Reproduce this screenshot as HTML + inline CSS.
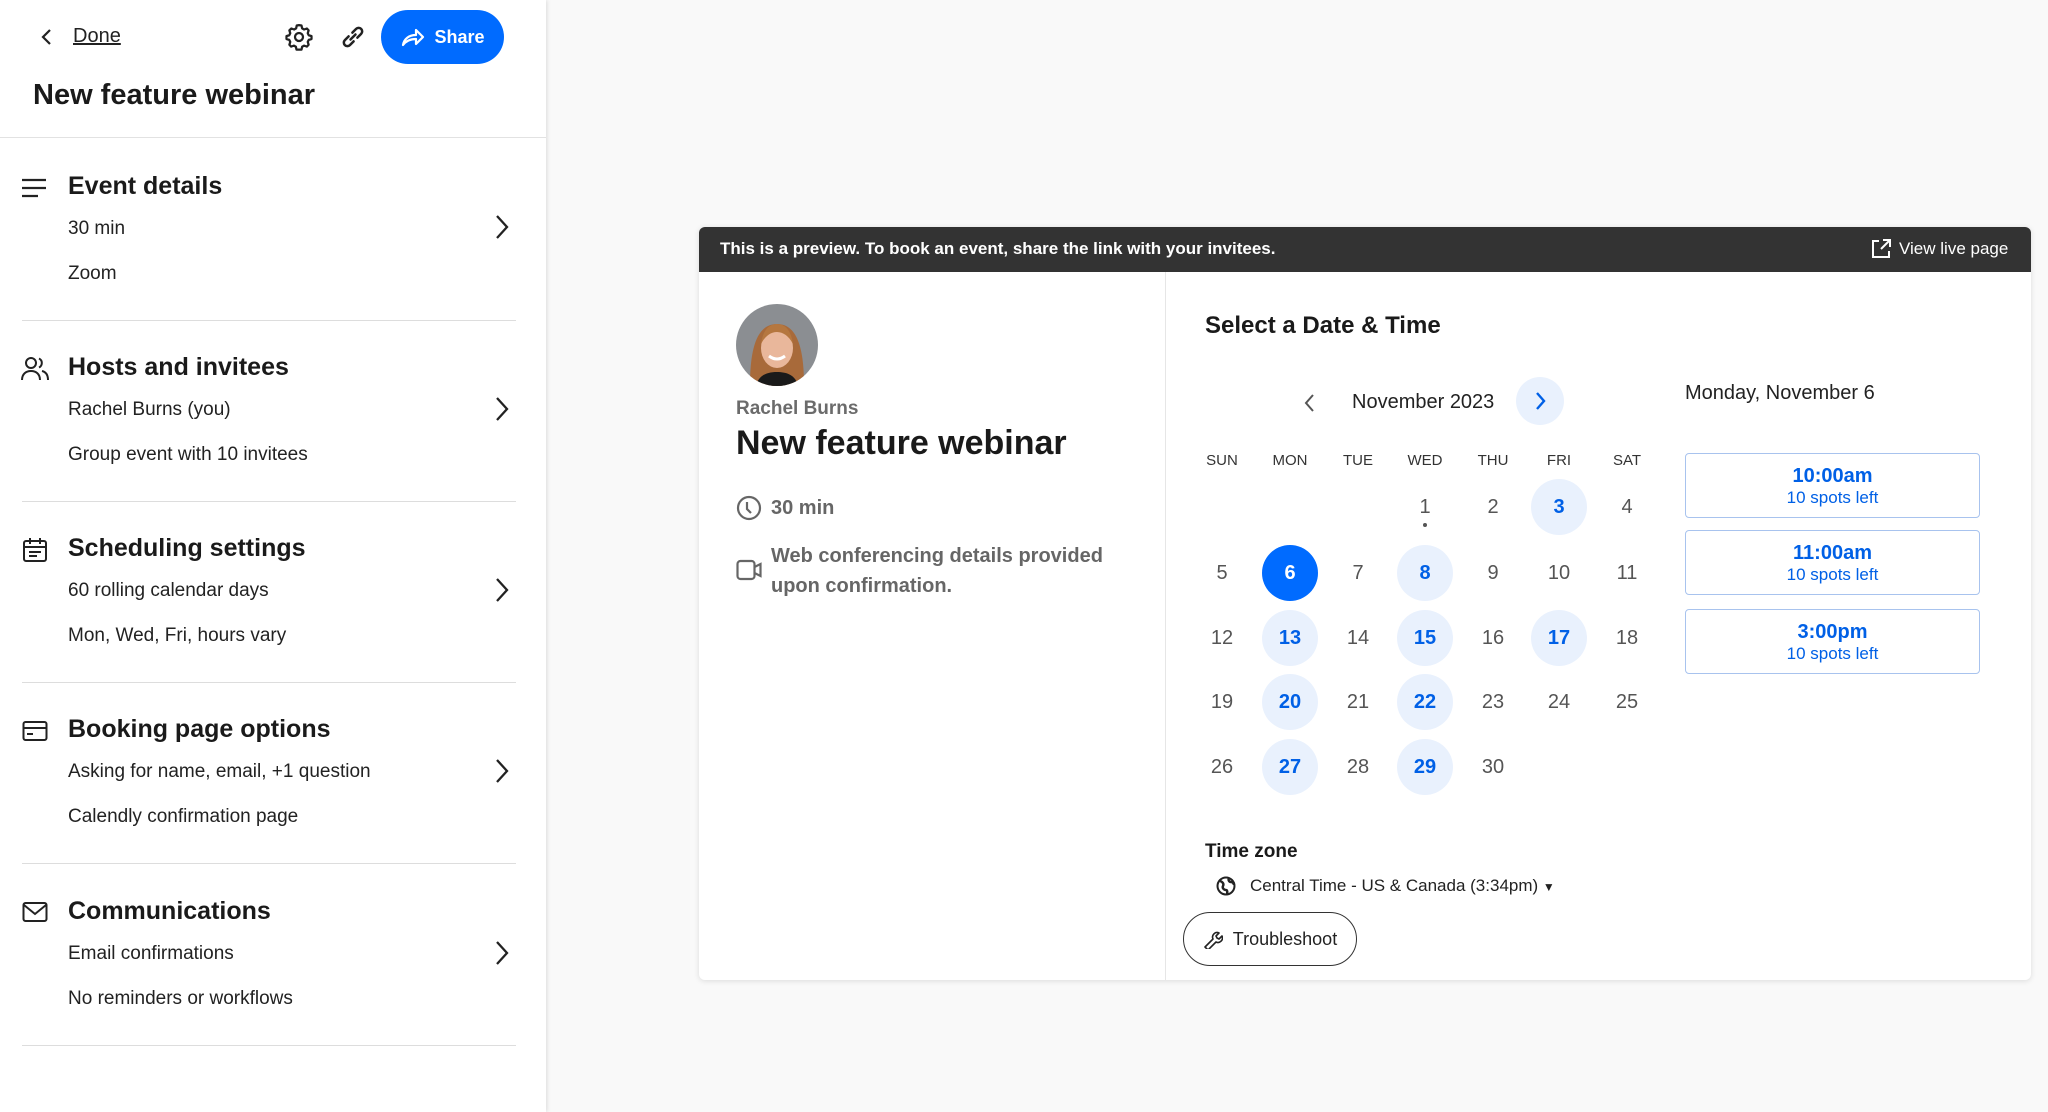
<!DOCTYPE html>
<html><head><meta charset="utf-8"><style>
*{box-sizing:border-box;margin:0;padding:0}
body{width:2048px;height:1112px;background:#f9f9f9;font-family:"Liberation Sans",sans-serif;color:#1a1a1a;position:relative;overflow:hidden}
.abs{position:absolute}
#left{left:0;top:0;width:546px;height:1112px;background:#fff;box-shadow:1px 0 4px rgba(0,0,0,.12)}
.sec-t{position:absolute;left:68px;font-size:25px;font-weight:bold}
.sec-s{position:absolute;left:68px;font-size:19px;color:#222}
.div{position:absolute;left:22px;width:494px;height:1px;background:#ddd}
.chev{position:absolute;left:492px}
#card{left:699px;top:227px;width:1332px;height:753px;background:#fff;box-shadow:0 1px 6px rgba(0,0,0,.12);border-radius:6px;overflow:hidden}
.day{position:absolute;width:56px;height:56px;margin-left:-28px;margin-top:-26px;border-radius:50%;display:flex;align-items:center;justify-content:center;font-size:20px;color:#555}
.av{background:#e9f1fd;color:#0060e6;font-weight:bold}
.wd{position:absolute;font-size:15px;color:#333;transform:translateX(-50%)}
.slot{position:absolute;left:986px;width:295px;height:65px;border:1px solid #a8c3ee;border-radius:4px;text-align:center;color:#0060e6}
.slot b{display:block;font-size:20px;margin-top:11px}
.slot span{font-size:17px}
</style></head><body>
<div id="left" class="abs">
<svg class="abs" style="left:38px;top:27px" width="18" height="20" viewBox="0 0 18 20"><path d="M12 3L5 10l7 7" fill="none" stroke="#222" stroke-width="2.2"/></svg>
<div class="abs" style="left:73px;top:25px;font-size:20px;text-decoration:underline;color:#222">Done</div>
<svg class="abs" style="left:284px;top:22px" width="30" height="30" viewBox="0 0 24 24"><path d="M12 2.5l2 .3.5 2.3 1.6.9 2.2-.8 1.4 1.5-.7 2.3.8 1.6 2.2.7v2.3l-2.2.7-.8 1.6.7 2.3-1.4 1.5-2.2-.8-1.6.9-.5 2.3h-4l-.5-2.3-1.6-.9-2.2.8-1.4-1.5.7-2.3-.8-1.6-2.2-.7v-2.3l2.2-.7.8-1.6-.7-2.3L5.9 5.2l2.2.8 1.6-.9.5-2.3z" fill="none" stroke="#222" stroke-width="1.8" stroke-linejoin="round"/><circle cx="12" cy="12" r="3.2" fill="none" stroke="#222" stroke-width="1.8"/></svg>
<svg class="abs" style="left:338px;top:22px" width="30" height="30" viewBox="0 0 24 24"><path d="M10 14l4-4M8.5 11.5l-3 3a2.8 2.8 0 004 4l3-3M15.5 12.5l3-3a2.8 2.8 0 00-4-4l-3 3" fill="none" stroke="#222" stroke-width="2" stroke-linecap="round"/></svg>
<div class="abs" style="left:381px;top:10px;width:123px;height:54px;border-radius:27px;background:#006bff;color:#fff;font-weight:bold;font-size:18px;display:flex;align-items:center;justify-content:center;gap:8px">
<svg width="26" height="22" viewBox="0 0 26 22"><path d="M3 19c1-6 6-10 13-10V4l7 7-7 7v-5C10 13 6 15 3 19z" fill="none" stroke="#fff" stroke-width="2.2" stroke-linejoin="round"/></svg>Share</div>
<div class="abs" style="left:33px;top:79px;font-size:29px;font-weight:bold">New feature webinar</div>
<div class="abs" style="left:0;top:137px;width:546px;height:1px;background:#e2e2e2"></div>

<svg class="abs" style="left:21px;top:177px" width="26" height="22"><path d="M1 3h24M1 11h24M1 19h16" stroke="#222" stroke-width="2.3"/></svg>
<div class="sec-t" style="top:172px">Event details</div>
<div class="sec-s" style="top:218px">30 min</div>
<div class="sec-s" style="top:263px">Zoom</div>
<svg class="chev" style="top:213px" width="20" height="28"><path d="M5 3l10 11L5 25" fill="none" stroke="#222" stroke-width="2.3"/></svg>
<div class="div" style="top:320px"></div>

<svg class="abs" style="left:21px;top:356px" width="28" height="26" viewBox="0 0 28 26"><circle cx="10" cy="7" r="5" fill="none" stroke="#222" stroke-width="2"/><path d="M1 24c0-6 4-9 9-9s9 3 9 9M18 2.5a5 5 0 010 9M21 15c4 1 6 4 6 9" fill="none" stroke="#222" stroke-width="2"/></svg>
<div class="sec-t" style="top:353px">Hosts and invitees</div>
<div class="sec-s" style="top:399px">Rachel Burns (you)</div>
<div class="sec-s" style="top:444px">Group event with 10 invitees</div>
<svg class="chev" style="top:395px" width="20" height="28"><path d="M5 3l10 11L5 25" fill="none" stroke="#222" stroke-width="2.3"/></svg>
<div class="div" style="top:501px"></div>

<svg class="abs" style="left:22px;top:537px" width="26" height="26" viewBox="0 0 26 26"><rect x="2" y="4" width="22" height="20" rx="2" fill="none" stroke="#222" stroke-width="2"/><path d="M2 10h22M8 1v6M18 1v6M7 15h12M7 19h8" stroke="#222" stroke-width="2"/></svg>
<div class="sec-t" style="top:534px">Scheduling settings</div>
<div class="sec-s" style="top:580px">60 rolling calendar days</div>
<div class="sec-s" style="top:625px">Mon, Wed, Fri, hours vary</div>
<svg class="chev" style="top:576px" width="20" height="28"><path d="M5 3l10 11L5 25" fill="none" stroke="#222" stroke-width="2.3"/></svg>
<div class="div" style="top:682px"></div>

<svg class="abs" style="left:22px;top:720px" width="26" height="22" viewBox="0 0 26 22"><rect x="1.5" y="2" width="23" height="18" rx="2" fill="none" stroke="#222" stroke-width="2"/><path d="M1.5 8h23M5 14h6" stroke="#222" stroke-width="2"/></svg>
<div class="sec-t" style="top:715px">Booking page options</div>
<div class="sec-s" style="top:761px">Asking for name, email, +1 question</div>
<div class="sec-s" style="top:806px">Calendly confirmation page</div>
<svg class="chev" style="top:757px" width="20" height="28"><path d="M5 3l10 11L5 25" fill="none" stroke="#222" stroke-width="2.3"/></svg>
<div class="div" style="top:863px"></div>

<svg class="abs" style="left:22px;top:901px" width="26" height="22" viewBox="0 0 26 22"><rect x="1.5" y="2" width="23" height="18" rx="2" fill="none" stroke="#222" stroke-width="2"/><path d="M2 4l11 9 11-9" fill="none" stroke="#222" stroke-width="2"/></svg>
<div class="sec-t" style="top:897px">Communications</div>
<div class="sec-s" style="top:943px">Email confirmations</div>
<div class="sec-s" style="top:988px">No reminders or workflows</div>
<svg class="chev" style="top:939px" width="20" height="28"><path d="M5 3l10 11L5 25" fill="none" stroke="#222" stroke-width="2.3"/></svg>
<div class="div" style="top:1045px"></div>
</div>

<div id="card" class="abs">
<div class="abs" style="left:0;top:0;width:1332px;height:45px;background:#333"></div>
<div class="abs" style="left:21px;top:12px;font-size:17px;font-weight:bold;color:#fff">This is a preview. To book an event, share the link with your invitees.</div>
<svg class="abs" style="left:1171px;top:11px" width="22" height="22" viewBox="0 0 22 22"><path d="M9 3H3v16h16v-6M13 2h7v7M20 2l-9 9" fill="none" stroke="#fff" stroke-width="2"/></svg>
<div class="abs" style="left:1200px;top:12px;font-size:17px;color:#fff">View live page</div>
<div class="abs" style="left:466px;top:45px;width:1px;height:708px;background:#e6e6e6"></div>

<svg class="abs" style="left:37px;top:77px" width="82" height="82" viewBox="0 0 82 82"><defs><clipPath id="c"><circle cx="41" cy="41" r="41"/></clipPath></defs><g clip-path="url(#c)"><rect width="82" height="82" fill="#8b8e92"/><path d="M14 82c0-30 4-62 27-62s27 32 27 62z" fill="#a86a3a"/><ellipse cx="41" cy="44" rx="16" ry="20" fill="#e9b79b"/><path d="M20 82c2-10 10-14 21-14s19 4 21 14z" fill="#1a1a1a"/><path d="M25 40c2-14 8-20 16-20s14 6 16 20c-4-8-10-12-16-12s-12 4-16 12z" fill="#b5773f"/><path d="M33 52q8 6 16 0" stroke="#fff" stroke-width="3" fill="none"/></g></svg>
<div class="abs" style="left:37px;top:171px;font-size:19px;font-weight:bold;color:#6b6b6b">Rachel Burns</div>
<div class="abs" style="left:37px;top:197px;font-size:34px;font-weight:bold">New feature webinar</div>
<svg class="abs" style="left:37px;top:268px" width="26" height="26" viewBox="0 0 26 26"><circle cx="13" cy="13" r="11" fill="none" stroke="#666" stroke-width="2.2"/><path d="M11 7v7l4 4" fill="none" stroke="#666" stroke-width="2.2"/></svg>
<div class="abs" style="left:72px;top:270px;font-size:20px;font-weight:bold;color:#666">30 min</div>
<svg class="abs" style="left:37px;top:332px" width="26" height="22" viewBox="0 0 26 22"><rect x="1.5" y="2" width="17" height="18" rx="3" fill="none" stroke="#666" stroke-width="2.2"/><path d="M18.5 8l6-3v12l-6-3" fill="none" stroke="#666" stroke-width="2.2"/></svg>
<div class="abs" style="left:72px;top:314px;font-size:20px;font-weight:bold;color:#666;line-height:30px">Web conferencing details provided<br>upon confirmation.</div>

<div class="abs" style="left:506px;top:85px;font-size:24px;font-weight:bold">Select a Date &amp; Time</div>
<svg class="abs" style="left:603px;top:165px" width="16" height="22"><path d="M11 3L4 11l7 8" fill="none" stroke="#555" stroke-width="2"/></svg>
<div class="abs" style="left:653px;top:164px;font-size:20px;color:#222">November 2023</div>
<div class="abs" style="left:817px;top:150px;width:48px;height:48px;border-radius:50%;background:#e9f1fd"></div>
<svg class="abs" style="left:833px;top:163px" width="16" height="22"><path d="M5 3l7 8-7 8" fill="none" stroke="#0060e6" stroke-width="2.4"/></svg>

<div class="wd" style="left:523px;top:225px">SUN</div>
<div class="wd" style="left:591px;top:225px">MON</div>
<div class="wd" style="left:659px;top:225px">TUE</div>
<div class="wd" style="left:726px;top:225px">WED</div>
<div class="wd" style="left:794px;top:225px">THU</div>
<div class="wd" style="left:860px;top:225px">FRI</div>
<div class="wd" style="left:928px;top:225px">SAT</div>

<div class="day" style="left:726px;top:278px">1</div>
<div class="abs" style="left:724px;top:296px;width:4px;height:4px;border-radius:50%;background:#555"></div>
<div class="day" style="left:794px;top:278px">2</div>
<div class="day av" style="left:860px;top:278px">3</div>
<div class="day" style="left:928px;top:278px">4</div>

<div class="day" style="left:523px;top:344px">5</div>
<div class="day" style="left:591px;top:344px;background:#006bff;color:#fff;font-weight:bold">6</div>
<div class="day" style="left:659px;top:344px">7</div>
<div class="day av" style="left:726px;top:344px">8</div>
<div class="day" style="left:794px;top:344px">9</div>
<div class="day" style="left:860px;top:344px">10</div>
<div class="day" style="left:928px;top:344px">11</div>

<div class="day" style="left:523px;top:409px">12</div>
<div class="day av" style="left:591px;top:409px">13</div>
<div class="day" style="left:659px;top:409px">14</div>
<div class="day av" style="left:726px;top:409px">15</div>
<div class="day" style="left:794px;top:409px">16</div>
<div class="day av" style="left:860px;top:409px">17</div>
<div class="day" style="left:928px;top:409px">18</div>

<div class="day" style="left:523px;top:473px">19</div>
<div class="day av" style="left:591px;top:473px">20</div>
<div class="day" style="left:659px;top:473px">21</div>
<div class="day av" style="left:726px;top:473px">22</div>
<div class="day" style="left:794px;top:473px">23</div>
<div class="day" style="left:860px;top:473px">24</div>
<div class="day" style="left:928px;top:473px">25</div>

<div class="day" style="left:523px;top:538px">26</div>
<div class="day av" style="left:591px;top:538px">27</div>
<div class="day" style="left:659px;top:538px">28</div>
<div class="day av" style="left:726px;top:538px">29</div>
<div class="day" style="left:794px;top:538px">30</div>

<div class="abs" style="left:986px;top:155px;font-size:20px;color:#222">Monday, November 6</div>
<div class="slot" style="top:226px"><b>10:00am</b><span>10 spots left</span></div>
<div class="slot" style="top:303px"><b>11:00am</b><span>10 spots left</span></div>
<div class="slot" style="top:382px"><b>3:00pm</b><span>10 spots left</span></div>

<div class="abs" style="left:506px;top:614px;font-size:19px;font-weight:bold">Time zone</div>
<svg class="abs" style="left:517px;top:649px" width="20" height="20" viewBox="0 0 20 20"><circle cx="10" cy="10" r="8.5" fill="none" stroke="#222" stroke-width="2"/><path d="M4 5c3 1 4 3 3 5s1 4 3 4 1 4 1 5M13 2c-1 2 0 4 2 4s3 2 3 3" fill="none" stroke="#222" stroke-width="2.5"/></svg>
<div class="abs" style="left:551px;top:649px;font-size:17px;color:#222">Central Time - US &amp; Canada (3:34pm) <span style="font-size:12px">▼</span></div>
<div class="abs" style="left:484px;top:685px;width:174px;height:54px;border:1px solid #333;border-radius:27px;font-size:18px;color:#222;display:flex;align-items:center;justify-content:center;gap:10px">
<svg width="20" height="20" viewBox="0 0 20 20"><path d="M2 18l8-8a4.5 4.5 0 016-6l-3 3 1 2 2 1 3-3a4.5 4.5 0 01-6 6l-8 8z" fill="none" stroke="#222" stroke-width="1.6" stroke-linejoin="round"/></svg>Troubleshoot</div>
</div>
</body></html>
